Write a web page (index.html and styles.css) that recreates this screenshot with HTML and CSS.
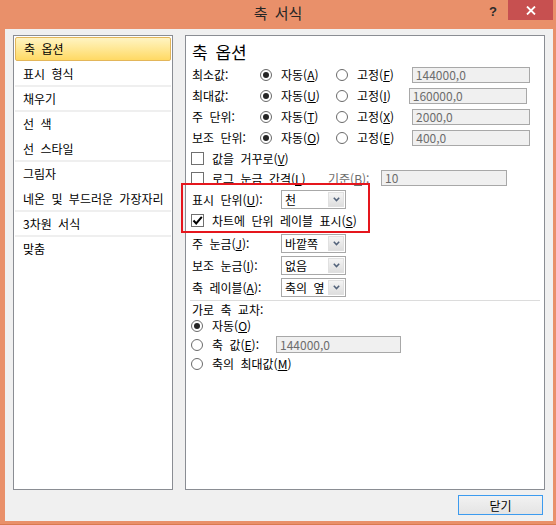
FILE: index.html
```html
<!DOCTYPE html>
<html lang="ko">
<head>
<meta charset="utf-8">
<title>축 서식</title>
<link rel="stylesheet" href="styles.css">
</head>
<body>
<div class="window">
  <div class="titlebar">
    <div class="tb-spacer"></div>
    <div class="title">축 서식</div>
    <div class="help">?</div>
    <div class="close">
      <svg width="10" height="9" viewBox="0 0 10 9"><path d="M1 0.5L9 8.5M9 0.5L1 8.5" stroke="#fff" stroke-width="1.8" fill="none"/></svg>
    </div>
  </div>
  <div class="client">
    <div class="main">
      <ul class="nav">
        <li class="sel">축 옵션</li>
        <li class="sep">표시 형식</li>
        <li class="sep">채우기</li>
        <li>선 색</li>
        <li class="sep">선 스타일</li>
        <li>그림자</li>
        <li class="sep">네온 및 부드러운 가장자리</li>
        <li class="sep">3차원 서식</li>
        <li>맞춤</li>
      </ul>
      <div class="panel">
        <div class="ph">축 옵션</div>

        <div class="row r21">
          <span class="lbl">최소값:</span>
          <span class="radio on"></span><span class="rt">자동(<u>A</u>)</span>
          <span class="radio"></span><span class="rt2">고정(<u>F</u>)</span>
          <span class="tb w118">144000,0</span>
        </div>
        <div class="row r21">
          <span class="lbl">최대값:</span>
          <span class="radio on"></span><span class="rt">자동(<u>U</u>)</span>
          <span class="radio"></span><span class="rt2">고정(<u>I</u>)</span>
          <span class="tb w118">160000,0</span>
        </div>
        <div class="row r21">
          <span class="lbl">주 단위:</span>
          <span class="radio on"></span><span class="rt">자동(<u>T</u>)</span>
          <span class="radio"></span><span class="rt2">고정(<u>X</u>)</span>
          <span class="tb w118">2000,0</span>
        </div>
        <div class="row r21">
          <span class="lbl">보조 단위:</span>
          <span class="radio on"></span><span class="rt">자동(<u>O</u>)</span>
          <span class="radio"></span><span class="rt2">고정(<u>E</u>)</span>
          <span class="tb w118">400,0</span>
        </div>

        <div class="row r20">
          <span class="cb"></span><span>값을 거꾸로(<u>V</u>)</span>
        </div>
        <div class="row r20">
          <span class="cb"></span><span class="logt">로그 눈금 간격(<u>L</u>)</span>
          <span class="dis base">기준(<u>B</u>):</span>
          <span class="tb w126">10</span>
        </div>

        <div class="row r22">
          <span class="lbl2">표시 단위(<u>U</u>):</span>
          <span class="combo"><span class="cv">천</span><span class="dd"><svg width="7" height="5" viewBox="0 0 7 5"><path d="M0.8 0.8L3.5 3.6L6.2 0.8" stroke="#52627a" stroke-width="1.5" fill="none"/></svg></span></span>
        </div>
        <div class="row r20">
          <span class="cb on"><svg width="13" height="13" viewBox="0 0 13 13"><path d="M2.5 6.5L5.2 9.5L10.8 2.8" stroke="#000" stroke-width="2" fill="none"/></svg></span><span>차트에 단위 레이블 표시(<u>S</u>)</span>
        </div>

        <div class="row r22 gap2">
          <span class="lbl2">주 눈금(<u>J</u>):</span>
          <span class="combo"><span class="cv">바깥쪽</span><span class="dd"><svg width="7" height="5" viewBox="0 0 7 5"><path d="M0.8 0.8L3.5 3.6L6.2 0.8" stroke="#52627a" stroke-width="1.5" fill="none"/></svg></span></span>
        </div>
        <div class="row r22">
          <span class="lbl2">보조 눈금(<u>I</u>):</span>
          <span class="combo"><span class="cv">없음</span><span class="dd"><svg width="7" height="5" viewBox="0 0 7 5"><path d="M0.8 0.8L3.5 3.6L6.2 0.8" stroke="#52627a" stroke-width="1.5" fill="none"/></svg></span></span>
        </div>
        <div class="row r22">
          <span class="lbl2">축 레이블(<u>A</u>):</span>
          <span class="combo"><span class="cv">축의 옆</span><span class="dd"><svg width="7" height="5" viewBox="0 0 7 5"><path d="M0.8 0.8L3.5 3.6L6.2 0.8" stroke="#52627a" stroke-width="1.5" fill="none"/></svg></span></span>
        </div>

        <div class="hsep"></div>

        <div class="row r13">가로 축 교차:</div>
        <div class="row r19">
          <span class="radio on lead"></span><span>자동(<u>O</u>)</span>
        </div>
        <div class="row r19">
          <span class="radio lead"></span><span class="axv">축 값(<u>E</u>):</span>
          <span class="tb w125 h17">144000,0</span>
        </div>
        <div class="row r19">
          <span class="radio lead"></span><span>축의 최대값(<u>M</u>)</span>
        </div>

        <div class="callout"></div>
      </div>
    </div>
    <div class="footer">
      <button class="btn">닫기</button>
    </div>
  </div>
</div>
</body>
</html>
```

FILE: styles.css
```css
html, body {
  margin: 0;
  padding: 0;
}
body {
  background: #E9906A;
  font-family: "Noto Sans CJK KR", "Noto Sans", sans-serif;
  font-size: 12px;
  word-spacing: 3px;
  color: #000;
}
.window {
  width: 556px;
  height: 525px;
  box-sizing: border-box;
  display: flex;
  flex-direction: column;
  border-bottom: 1px solid #D97A50;
}
.titlebar {
  height: 29px;
  flex-shrink: 0;
  display: flex;
  align-items: flex-start;
}
.tb-spacer {
  width: 74px;
}
.title {
  flex: 1;
  text-align: center;
  font-size: 15px;
  line-height: 26px;
  color: #262626;
}
.help {
  width: 22px;
  padding-right: 4px;
  height: 20px;
  text-align: center;
  font-family: "Liberation Sans", sans-serif;
  font-weight: bold;
  font-size: 13px;
  line-height: 23px;
  color: #2b2b2b;
}
.close {
  width: 45px;
  height: 20px;
  margin-right: 3px;
  background: #C75050;
  display: flex;
  align-items: center;
  justify-content: center;
}
.close svg { display: block; }

.client {
  margin-left: 5px;
  width: 548px;
  height: 492px;
  box-sizing: border-box;
  background: #F0F0F0;
  padding: 6px 8px 0 8px;
}
.main {
  display: flex;
  gap: 12px;
  height: 455px;
}

.nav {
  width: 160px;
  height: 455px;
  box-sizing: border-box;
  margin: 0;
  padding: 1px;
  list-style: none;
  background: #fff;
  border: 1px solid #8A8D93;
}
.nav li {
  height: 25px;
  box-sizing: border-box;
  line-height: 23px;
  padding-left: 8px;
  border-bottom: 2px solid transparent;
  white-space: nowrap;
}
.nav li.sep {
  border-bottom-color: #EFEFEF;
}
.nav li.sel {
  height: 24px;
  margin-bottom: 1px;
  line-height: 22px;
  border: 1px solid #E3B65A;
  border-radius: 2px;
  background: linear-gradient(#FFF4C2, #FFE68F 55%, #FFD964);
}

.panel {
  position: relative;
  width: 360px;
  height: 455px;
  box-sizing: border-box;
  background: #fff;
  border: 1px solid #8A8D93;
  padding: 5px 6px 0 6px;
}
.ph {
  font-size: 17px;
  line-height: 22px;
  height: 22px;
  margin-bottom: 1px;
}
.row {
  display: flex;
  align-items: center;
  white-space: nowrap;
}
.r21 { height: 21px; }
.r20 { height: 20px; }
.r22 { height: 22px; }
.r19 { height: 19px; }
.r13 { height: 13px; }
.gap2 { margin-top: 2px; }

.lbl { width: 68px; }
.lbl2 { width: 89px; }

.radio {
  width: 12px;
  height: 12px;
  box-sizing: border-box;
  border: 1px solid #6A6A6A;
  border-radius: 50%;
  background: #fff;
  margin-right: 9px;
  flex-shrink: 0;
  display: flex;
  align-items: center;
  justify-content: center;
}
.radio.on::after {
  content: "";
  width: 6px;
  height: 6px;
  border-radius: 50%;
  background: #262626;
}
.radio.lead { margin-left: -1px; }
.rt { width: 55px; }
.rt2 { margin-right: 18px; }

.tb {
  height: 16px;
  box-sizing: border-box;
  border: 1px solid #A8A8A8;
  background: #F0F0F0;
  color: #6D6D6D;
  line-height: 14px;
  padding-left: 3px;
  flex-shrink: 0;
}
.w118 { width: 118px; }
.w126 { width: 126px; }
.w125 { width: 125px; }
.h17 { height: 17px; line-height: 15px; }

.cb {
  width: 13px;
  height: 13px;
  box-sizing: border-box;
  border: 1px solid #707070;
  background: #fff;
  margin-left: -1px;
  margin-right: 8px;
  flex-shrink: 0;
  position: relative;
}
.cb svg {
  position: absolute;
  left: -1px;
  top: -1px;
}
.logt { width: 116px; }
.dis { color: #6D6D6D; }
.base { width: 53px; }
.axv { width: 64px; }

.combo {
  width: 65px;
  height: 19px;
  box-sizing: border-box;
  border: 1px solid #A8A8A8;
  background: #fff;
  display: flex;
}
.cv {
  flex: 1;
  padding-left: 3px;
  line-height: 17px;
}
.dd {
  width: 16px;
  margin: 1px;
  background: linear-gradient(#F4F4F4, #DEDEDE);
  border: 1px solid #E0E0E0;
  box-sizing: border-box;
  display: flex;
  align-items: center;
  justify-content: center;
}
.dd svg { display: block; }

.hsep {
  height: 1px;
  background: #DCDCDC;
  margin: 2px -2px 2px -2px;
}

.callout {
  position: absolute;
  left: -5px;
  top: 147px;
  width: 189px;
  height: 50px;
  box-sizing: border-box;
  border: 2px solid #E5161D;
}

.footer {
  display: flex;
  justify-content: flex-end;
  padding-top: 5px;
  padding-right: 2px;
}
.btn {
  width: 85px;
  height: 20px;
  box-sizing: border-box;
  border: 1px solid #3C9BEF;
  background: linear-gradient(#F2F2F2, #E4E4E4);
  font-family: "Noto Sans CJK KR", sans-serif;
  font-size: 12px;
  color: #000;
  padding: 0;
  line-height: 17px;
  margin: 0;
}
```
